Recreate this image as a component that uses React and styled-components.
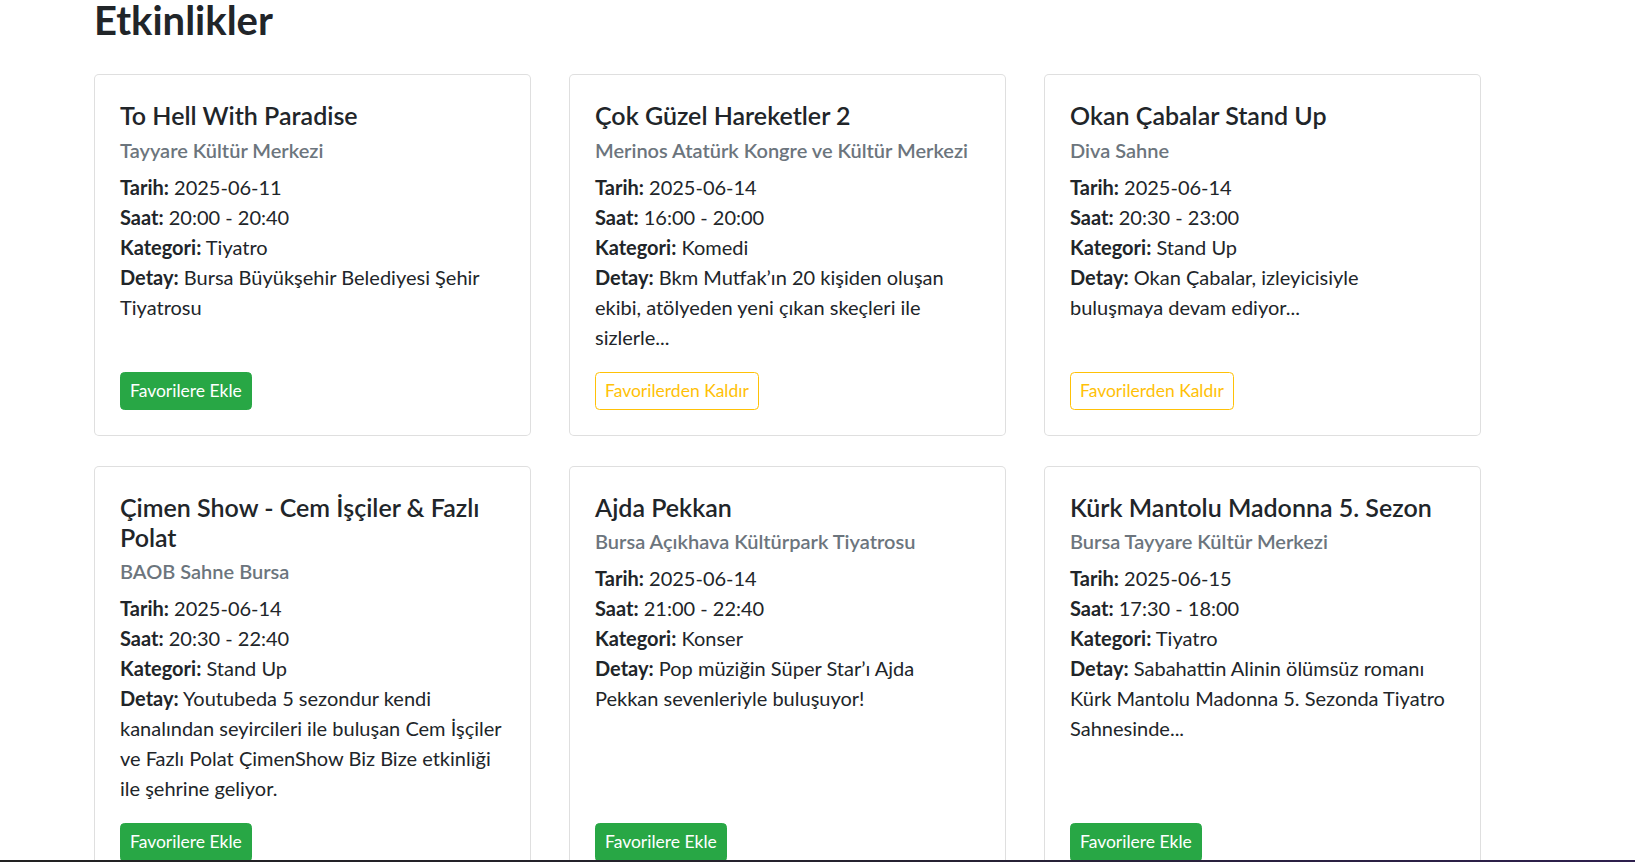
import React from "react";
import styled, { createGlobalStyle } from "styled-components";

const GlobalStyle = createGlobalStyle`
  html, body { margin: 0; padding: 0; background: #ffffff; }
  body {
    font-family: Lato, "Noto Sans", sans-serif;
    color: #212529;
    font-size: 20px;
    line-height: 1.5;
  }
  *, *::before, *::after { box-sizing: border-box; }
`;

const events = [
  {
    title: "To Hell With Paradise",
    venue: "Tayyare Kültür Merkezi",
    date: "2025-06-11",
    time: "20:00 - 20:40",
    category: "Tiyatro",
    detail: "Bursa Büyükşehir Belediyesi Şehir Tiyatrosu",
    favorite: false,
  },
  {
    title: "Çok Güzel Hareketler 2",
    venue: "Merinos Atatürk Kongre ve Kültür Merkezi",
    date: "2025-06-14",
    time: "16:00 - 20:00",
    category: "Komedi",
    detail: "Bkm Mutfak’ın 20 kişiden oluşan ekibi, atölyeden yeni çıkan skeçleri ile sizlerle...",
    favorite: true,
  },
  {
    title: "Okan Çabalar Stand Up",
    venue: "Diva Sahne",
    date: "2025-06-14",
    time: "20:30 - 23:00",
    category: "Stand Up",
    detail: "Okan Çabalar, izleyicisiyle buluşmaya devam ediyor...",
    favorite: true,
  },
  {
    title: "Çimen Show - Cem İşçiler & Fazlı Polat",
    venue: "BAOB Sahne Bursa",
    date: "2025-06-14",
    time: "20:30 - 22:40",
    category: "Stand Up",
    detail:
      "Youtubeda 5 sezondur kendi kanalından seyircileri ile buluşan Cem İşçiler ve Fazlı Polat ÇimenShow Biz Bize etkinliği ile şehrine geliyor.",
    favorite: false,
  },
  {
    title: "Ajda Pekkan",
    venue: "Bursa Açıkhava Kültürpark Tiyatrosu",
    date: "2025-06-14",
    time: "21:00 - 22:40",
    category: "Konser",
    detail: "Pop müziğin Süper Star’ı Ajda Pekkan sevenleriyle buluşuyor!",
    favorite: false,
  },
  {
    title: "Kürk Mantolu Madonna 5. Sezon",
    venue: "Bursa Tayyare Kültür Merkezi",
    date: "2025-06-15",
    time: "17:30 - 18:00",
    category: "Tiyatro",
    detail: "Sabahattin Alinin ölümsüz romanı\nKürk Mantolu Madonna 5. Sezonda Tiyatro Sahnesinde...",
    favorite: false,
  },
];

const Page = styled.main`
  padding: 0 94px 30px 94px;
`;

const PageTitle = styled.h1`
  margin: 0 0 34px 0;
  font-size: 40px;
  line-height: 40px;
  font-weight: 700;
  color: #212529;
`;

const CardGrid = styled.div`
  display: grid;
  grid-template-columns: repeat(3, 437px);
  column-gap: 38px;
  row-gap: 30px;
`;

const Card = styled.article`
  display: flex;
  flex-direction: column;
  background: #ffffff;
  border: 1px solid rgba(0, 0, 0, 0.125);
  border-radius: 5px;
`;

const CardBody = styled.div`
  flex: 1 1 auto;
  display: flex;
  flex-direction: column;
  align-items: flex-start;
  padding: 25px;
`;

const CardTitle = styled.h5`
  margin: 0 0 7.5px 0;
  font-size: 25px;
  line-height: 1.2;
  font-weight: 600;
  color: #212529;
`;

const CardSubtitle = styled.h6`
  margin: 0 0 10px 0;
  font-size: 20px;
  line-height: 1.2;
  font-weight: 600;
  color: #6c757d;
`;

const Info = styled.div`
  margin: 0 0 20px 0;
  font-size: 20px;
  line-height: 30px;
`;

const InfoLine = styled.div`
  white-space: ${(p) => (p.$multiline ? "pre-line" : "normal")};
`;

const Label = styled.strong`
  font-weight: 700;
`;

const FavButton = styled.button`
  margin-top: auto;
  display: inline-block;
  padding: 5px 9px;
  font-family: inherit;
  font-size: 17.5px;
  line-height: 1.5;
  font-weight: 400;
  border-radius: 4.5px;
  cursor: pointer;
  border: 1px solid ${(p) => (p.$remove ? "#ffc107" : "#28a745")};
  background: ${(p) => (p.$remove ? "transparent" : "#28a745")};
  color: ${(p) => (p.$remove ? "#ffc107" : "#ffffff")};
`;

const BottomBar = styled.footer`
  position: fixed;
  left: 0;
  right: 0;
  bottom: 0;
  height: 2px;
  background: linear-gradient(90deg, #222222 0%, #25222e 50%, #2d1f4d 100%);
`;

function EventCard({ event }) {
  return (
    <Card>
      <CardBody>
        <CardTitle>{event.title}</CardTitle>
        <CardSubtitle>{event.venue}</CardSubtitle>
        <Info>
          <InfoLine>
            <Label>Tarih:</Label> {event.date}
          </InfoLine>
          <InfoLine>
            <Label>Saat:</Label> {event.time}
          </InfoLine>
          <InfoLine>
            <Label>Kategori:</Label> {event.category}
          </InfoLine>
          <InfoLine $multiline>
            <Label>Detay:</Label> {event.detail}
          </InfoLine>
        </Info>
        <FavButton $remove={event.favorite}>
          {event.favorite ? "Favorilerden Kaldır" : "Favorilere Ekle"}
        </FavButton>
      </CardBody>
    </Card>
  );
}

export default function App() {
  return (
    <>
      <GlobalStyle />
      <Page>
        <PageTitle>Etkinlikler</PageTitle>
        <CardGrid>
          {events.map((e) => (
            <EventCard key={e.title} event={e} />
          ))}
        </CardGrid>
      </Page>
      <BottomBar />
    </>
  );
}
